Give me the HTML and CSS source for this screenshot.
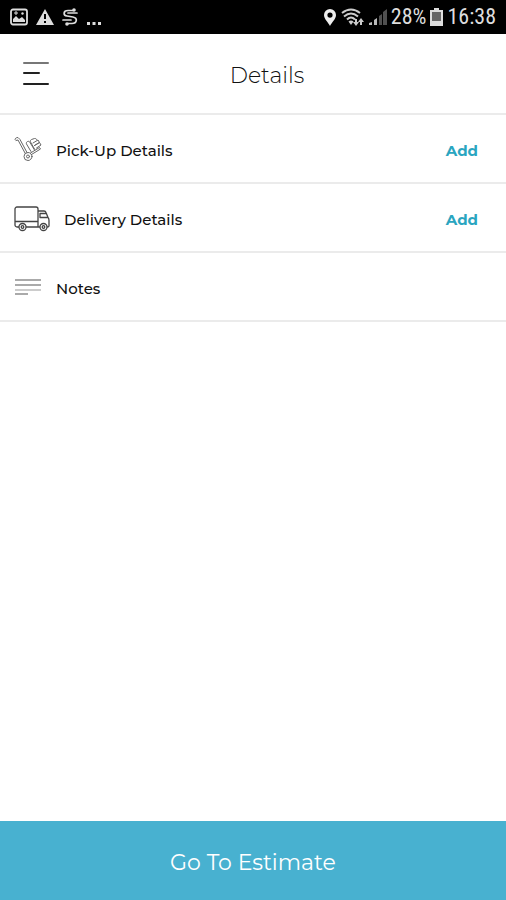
FILE: index.html
```html
<!DOCTYPE html>
<html lang="en">
<head>
<meta charset="utf-8">
<meta name="viewport" content="width=device-width, initial-scale=1">
<title>Details</title>
<link rel="stylesheet" href="styles.css">
</head>
<body>
<div class="status">
  <div class="status-left">
    <svg width="18" height="18" viewBox="0 0 18 18"><rect x="1" y="1.500" width="16" height="15" rx="2" fill="none" stroke="#ddd" stroke-width="1.800"/><path d="M3 14V11L6 8l3 3 3-2 3 3v2z" fill="#ddd"/><path d="M6 3v4M4 5h4" stroke="#ddd"/><circle cx="12.500" cy="5.500" r="1.200" fill="#ddd"/></svg>
    <svg width="18" height="18" viewBox="0 0 18 18"><path d="M9 1 18 17H0z" fill="#ddd"/><path d="M9 6v5M9 13v2" stroke="#000" stroke-width="2"/></svg>
    <svg width="16" height="20" viewBox="0 0 16 20"><path d="M11 3.500H6C1 3.500 1 8.500 5 9l6 1c5 1 4 6.500-1 6.500H6M15 6H6M1 13h8" fill="none" stroke="#ddd" stroke-width="1.700" stroke-linecap="round"/><circle cx="12" cy="3" r="1.800" fill="#ddd"/><circle cx="5" cy="17" r="1.800" fill="#ddd"/></svg>
    <svg width="16" height="18" viewBox="0 0 16 18"><path d="M1 14h3v3H1zM6.500 14h3v3h-3zM12 14h3v3h-3z" fill="#ddd"/></svg>
  </div>
  <div class="status-right">
    <svg width="14" height="18" viewBox="0 0 14 18"><path fill-rule="evenodd" d="M7 1a6 6 0 0 0-6 6c0 4 4 7 6 11 2-4 6-7 6-11a6 6 0 0 0-6-6zm0 3.500a2.600 2.600 0 1 1 0 5.200 2.600 2.600 0 0 1 0-5.200z" fill="#eee"/></svg>
    <svg width="24" height="18" viewBox="0 0 24 18"><path d="M1 5q9-7 18 0M3 8.500q7-6 14 0M6 11.500q4-4 8 0" fill="none" stroke="#ccc" stroke-width="2"/><path d="m7.500 13.500 2.500 3.500 2.500-3.500q-2.500-2-5 0z" fill="#ccc"/><path d="M16 11v3h2l-3 4-3-4h2v-3zM19 17v-3h-2l3-4 3 4h-2v3z" fill="#ccc"/></svg>
    <svg width="18" height="18" viewBox="0 0 18 18"><path d="M0 15l3-1v3H0zM5 12l3-2v7H5z" fill="#bbb"/><path d="M10 8l3-2v11h-3zM14 4l4-3v16h-4z" fill="#505050"/></svg>
    <span>28%</span>
    <svg width="13" height="18" viewBox="0 0 13 18"><path d="M4 0h5v2h4v16H0V2h4z" fill="#ddd"/><path d="M2 4h9v9H2z" fill="#666"/></svg>
    <span>16:38</span>
  </div>
</div>
<header class="header">
  <button class="menu" type="button" aria-label="Menu">
    <svg width="28" height="26" viewBox="0 0 28 26" fill="none" stroke-width="2" stroke-linecap="round"><path d="M2 2h24" stroke="#777"/><path d="M2 12h15M2 23h24" stroke="#222"/></svg>
  </button>
  <h1 class="title">Details</h1>
</header>
<main class="list">
  <div class="row">
    <svg width="28" height="28" viewBox="0 0 28 28" fill="none" stroke="#666" stroke-width="1" stroke-linejoin="round" stroke-linecap="round"><path d="M1 3.500c0-1 1-2 3-2l2 2 7 13M2 4.500l2-.5 7 13"/><circle cx="14" cy="20.500" r="4"/><circle cx="14" cy="20.500" r="1.500"/><path d="m17.500 18.500 9-5.500-1-1.500-9 5.500"/><path d="M17 15.500 12.500 8c-.5-1 0-2 1-2.500s2 0 2.500 1l4.500 7.500M20.500 13 16.500 6c-.5-1 0-2 1-2.500l3-1c1-.3 2 .5 2.500 1.500M19 7l5-3 1.500 2.500-5 3M20.500 9.500l5-3L27 9l-4.500 3"/></svg>
    <span class="label">Pick-Up Details</span>
    <button class="add" type="button" aria-label="Add pick-up details">Add</button>
  </div>
  <div class="row">
    <svg width="36" height="28" viewBox="0 0 36 28" fill="none" stroke="#444" stroke-width="1.300" stroke-linejoin="round"><path d="M5 22H3a2 2 0 0 1-2-2V4a2 2 0 0 1 2-2h19a2 2 0 0 1 2 2v18H12M1 16.500h23M24 6h6q1.500 0 2 1.500l2 5q1 1 1 3V21q0 1-2 1M24 22h2M33.500 12.500H26V8.500h6"/><circle cx="8.500" cy="22" r="3.500"/><circle cx="8.500" cy="22" r="1.300"/><circle cx="29.500" cy="22" r="3.500"/><circle cx="29.500" cy="22" r="1.300"/></svg>
    <span class="label">Delivery Details</span>
    <button class="add" type="button" aria-label="Add delivery details">Add</button>
  </div>
  <div class="row">
    <svg width="28" height="24" viewBox="0 0 28 24" stroke-width="2"><path d="M1 4h26M1 9h26" stroke="#aaa"/><path d="M1 14h26" stroke="#ccc"/><path d="M1 18h13" stroke="#aaa"/></svg>
    <span class="label">Notes</span>
  </div>
</main>
<button class="estimate" type="button">Go To Estimate</button>
</body>
</html>
```
FILE: styles.css
```css
* { box-sizing: border-box; }
body {
  margin: 0;
  min-height: 100vh;
  display: flex;
  flex-direction: column;
  background: #fff;
  color: #111;
  font-family: Montserrat, Inter, sans-serif;
}
svg { display: block; flex: none; }
button { border: 0; padding: 0; background: none; font-family: inherit; cursor: pointer; }
.status {
  height: 34px;
  padding: 0 10px;
  display: flex;
  align-items: center;
  justify-content: space-between;
  background: #000;
  color: #ddd;
  font: 22px/34px "Roboto Condensed", Roboto, sans-serif;
}
.status-left { display: flex; align-items: center; gap: 8px; }
.status-right { display: flex; align-items: center; gap: 4px; }
.header {
  height: 81px;
  padding: 0 22px;
  display: grid;
  grid-template-columns: 28px 1fr 28px;
  align-items: center;
  border-bottom: 2px solid #ebebeb;
}
.title { margin: 0; padding-top: 4px; text-align: center; padding-left: 28px; font-size: 22px; line-height: 28px; font-weight: 300; }
.list { flex: 1; }
.row {
  height: 69px;
  padding: 2px 28px 0 14px;
  display: flex;
  align-items: center;
  gap: 14px;
  border-bottom: 2px solid #ebebeb;
}
.label { padding-top: 2px; font-size: 15px; line-height: 20px; font-weight: 500; }
.add { margin-left: auto; padding-top: 2px; color: #2aa5c0; font-size: 15px; line-height: 20px; font-weight: 700; }
.estimate {
  height: 79px;
  padding-top: 4px;
  background: #48b1d0;
  color: #fff;
  font-size: 22px;
  line-height: 28px;
  font-weight: 400;
}
```
